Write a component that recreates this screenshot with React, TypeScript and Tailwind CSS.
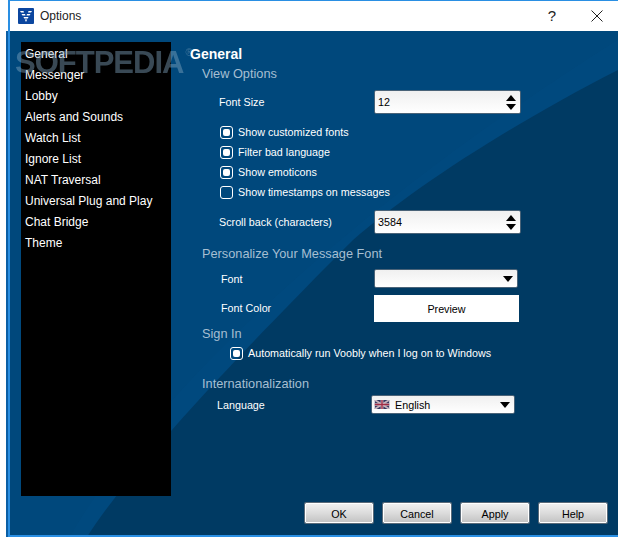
const NAV = [
  "General",
  "Messenger",
  "Lobby",
  "Alerts and Sounds",
  "Watch List",
  "Ignore List",
  "NAT Traversal",
  "Universal Plug and Play",
  "Chat Bridge",
  "Theme",
];

const CHECKS = [
  { label: "Show customized fonts", on: true },
  { label: "Filter bad language", on: true },
  { label: "Show emoticons", on: true },
  { label: "Show timestamps on messages", on: false },
];

const BUTTONS = ["OK", "Cancel", "Apply", "Help"];

function Logo() {
  return (
    <svg width="16" height="16" viewBox="0 0 16 16" className="shrink-0">
      <rect width="16" height="16" rx="1" fill="#0b469f" />
      <path d="M2 3h3.500l.5 1.500H3zM3.500 6H7l.5 1.500H4.500zM14 3h-3.500l-.5 1.500h3zM12.500 6H9l-.5 1.500h3zM5.500 9h5l-.7 1.500H6.200zM6.800 11.500h2.400L8 14z" fill="#fff" />
    </svg>
  );
}

function Checkbox({ on }: { on: boolean }) {
  return (
    <span className="flex h-[13px] w-[13px] shrink-0 items-center justify-center rounded-[3px] border border-white">
      {on && <span className="h-[7px] w-[7px] rounded-[2px] bg-white" />}
    </span>
  );
}

function Arrow({ up }: { up?: boolean }) {
  return (
    <svg width="10" height="6" viewBox="0 0 10 6">
      <path d={up ? "M5 0l5 6H0z" : "M0 0h10L5 6z"} fill="#000" />
    </svg>
  );
}

function SpinBox({ value }: { value: string }) {
  return (
    <div className="flex h-[24px] w-[147px] items-center justify-between rounded-[2px] border border-[#4a6378] bg-gradient-to-b from-[#f0f0f0] to-[#ffffff] pl-[3px] pr-[4px] text-black">
      <span>{value}</span>
      <div className="flex flex-col gap-[3px]">
        <Arrow up />
        <Arrow />
      </div>
    </div>
  );
}

function Combo({ children }: { children?: React.ReactNode }) {
  return (
    <div className="flex h-[19px] w-[144px] items-center justify-between rounded-[2px] border border-[#4a6378] bg-gradient-to-b from-[#f0f0f0] to-[#ffffff] pr-[4px] text-black">
      <div className="flex items-center">{children}</div>
      <Arrow />
    </div>
  );
}

function Flag() {
  return (
    <svg width="16" height="9" viewBox="0 0 16 10" className="mx-[2px] blur-[0.5px]">
      <rect width="16" height="10" fill="#33365f" />
      <path d="M0 0l16 10M16 0L0 10" stroke="#c8b4bc" strokeWidth="2" />
      <path d="M8 0v10M0 5h16" stroke="#d8c4cc" strokeWidth="3" />
      <path d="M8 0v10M0 5h16" stroke="#a02c44" strokeWidth="1.500" />
    </svg>
  );
}

function Heading({ children, className }: { children: React.ReactNode; className?: string }) {
  return <div className={`h-[18px] pl-[12px] text-[12.750px] leading-[20px] text-[#a6bfd2] ${className ?? ""}`}>{children}</div>;
}

export default function App() {
  return (
    <div className="flex h-[537px] w-[618px] overflow-hidden bg-white text-[10.750px] leading-[16px] text-white [font-family:'Liberation_Sans',sans-serif]">
      <div className="ml-[6px] mt-[31px] w-[2px] bg-[#0b5fa5]" />
      <div className="flex flex-1 flex-col border-b-2 border-l-2 border-t border-[#2a8fe3]">
        {/* title bar */}
        <div className="flex h-[30px] shrink-0 items-center bg-white pl-[8px] text-[#222]">
          <Logo />
          <span className="ml-[6px] text-[12px]">Options</span>
          <span className="ml-auto mr-[35px] text-[15px]">?</span>
          <svg width="12" height="12" viewBox="0 0 12 12" className="mr-[15px]">
            <path d="M.5.5l11 11M11.500.5l-11 11" stroke="#222" fill="none" />
          </svg>
        </div>

        <div className="relative flex flex-1 overflow-hidden bg-[#00487c]">
          <svg width="618" height="537" viewBox="0 0 618 537" className="absolute left-[-10px] top-[-31px]">
            <path d="M70 537C130 430 300 240 618 40V537z" fill="#004d85" opacity="0.35" />
            <path d="M87 537C115 492 190 403 353 240C410 190 510 125 618 70V537z" fill="#003a63" />
          </svg>

          <nav className="relative ml-[11px] mt-[11px] h-[454px] w-[150px] shrink-0 bg-black pt-px text-[12px]">
            {NAV.map((n) => (
              <div key={n} className="flex h-[21px] items-center pl-[4px]">
                {n}
              </div>
            ))}
          </nav>

          {/* watermark, sits under the labels */}
          <div className="pointer-events-none absolute left-[5px] top-[14px] flex items-start text-[#7fa3bd] opacity-45">
            <span className="text-[31px] font-bold leading-[36px] tracking-[-1px]">SOFTPEDIA</span>
            <span className="ml-[2px] mt-[2px] text-[10px] leading-[12px]">®</span>
          </div>

          <div className="relative ml-[19px] flex flex-1 flex-col">
            <div className="mt-[14px] h-[18px] text-[14px] font-bold leading-[18px]">General</div>
            <Heading className="mt-[1px]">View Options</Heading>

            <div className="ml-[29px] mt-[8px] flex h-[24px] items-center">
              <span className="w-[155px]">Font Size</span>
              <SpinBox value="12" />
            </div>

            <div className="ml-[30px] mt-[8px] flex flex-col">
              {CHECKS.map((c) => (
                <div key={c.label} className="flex h-[20px] items-center gap-[5px]">
                  <Checkbox on={c.on} />
                  <span>{c.label}</span>
                </div>
              ))}
            </div>

            <div className="ml-[29px] mt-[8px] flex h-[24px] items-center">
              <span className="w-[155px]">Scroll back (characters)</span>
              <SpinBox value="3584" />
            </div>

            <Heading className="mt-[10px]">Personalize Your Message Font</Heading>

            <div className="ml-[31px] mt-[7px] flex h-[19px] items-center">
              <span className="w-[153px]">Font</span>
              <Combo />
            </div>

            <div className="ml-[31px] mt-[7px] flex h-[27px] items-center">
              <span className="w-[153px] pb-[2px]">Font Color</span>
              <div className="flex h-[27px] w-[145px] items-center justify-center bg-white text-black">Preview</div>
            </div>

            <Heading className="mt-[2px]">Sign In</Heading>

            <div className="ml-[40px] mt-px flex h-[20px] items-center gap-[5px]">
              <Checkbox on />
              <span>Automatically run Voobly when I log on to Windows</span>
            </div>

            <Heading className="mt-[11px]">Internationalization</Heading>

            <div className="ml-[27px] mt-[3px] flex h-[19px] items-center">
              <span className="w-[154px]">Language</span>
              <Combo>
                <Flag />
                <span className="ml-[3px]">English</span>
              </Combo>
            </div>

            <div className="mb-[12px] mr-[11px] mt-auto flex justify-end gap-[10px]">
              {BUTTONS.map((b) => (
                <button
                  key={b}
                  className="h-[20px] w-[68px] rounded-[1px] border border-white bg-gradient-to-b from-[#efefef] via-[#dcdcdc] to-[#c4c4c4] pt-px text-black shadow-[0_0_0_1px_#5a6a78]"
                >
                  {b}
                </button>
              ))}
            </div>
          </div>
        </div>
      </div>
    </div>
  );
}
